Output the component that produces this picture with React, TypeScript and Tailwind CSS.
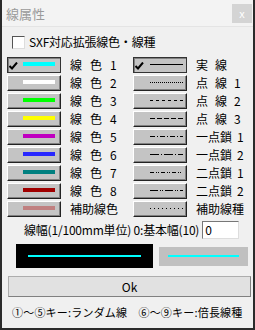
import React from "react";

const colors = ["#00ffff", "#ffffff", "#00ff00", "#ffff00", "#c000c0", "#2828ff", "#008080", "#a00000", "#c08080"];
const colorLabels = ["線 色 1", "線 色 2", "線 色 3", "線 色 4", "線 色 5", "線 色 6", "線 色 7", "線 色 8", "補助線色"];
const typeLabels = ["実 線", "点 線 1", "点 線 2", "点 線 3", "一点鎖 1", "一点鎖 2", "二点鎖 1", "二点鎖 2", "補助線種"];
const dashes = ["", "1 1", "3 3", "5 2", "5 2 1 2", "9 2 1 2", "4 2 1 1 1 2", "8 2 1 1 1 2", "1 3"];

function Check() {
  return (
    <svg width="9" height="8" viewBox="0 0 9 8" className="absolute left-[1px] top-[4px]">
      <path d="M0.5 4 L3 6.5 L8 0.5" stroke="#000" strokeWidth="2" fill="none" />
    </svg>
  );
}

function Label({ text, gap }: { text: string; gap: number }) {
  const parts = text.split(" ");
  return (
    <span className="flex items-center text-[12px] leading-none">
      {parts.map((p, i) => (
        <React.Fragment key={i}>
          {i > 0 && <span className="inline-block" style={{ width: gap }} />}
          <span>{p}</span>
        </React.Fragment>
      ))}
    </span>
  );
}

function Btn({ checked, children }: { checked?: boolean; children: React.ReactNode }) {
  return (
    <div
      className={
        "relative w-[54px] h-[16px] shrink-0 bg-[#c4c4c4] " +
        (checked
          ? "border border-[#333] shadow-[inset_1px_1px_0_#808080]"
          : "border-t border-l border-t-white border-l-white border-b border-r border-b-[#222] border-r-[#222] shadow-[inset_-1px_-1px_0_#808080]")
      }
    >
      {checked && <Check />}
      {children}
    </div>
  );
}

export default function App() {
  const font = { fontFamily: '"Noto Sans CJK JP", "Liberation Sans", sans-serif' };
  return (
    <div className="w-[255px] h-[330px] bg-[#f0f0f0] border-l-2 border-r-2 border-b-2 border-l-[#2b2b2b] border-r-[#2b2b2b] border-b-[#2b2b2b] flex flex-col text-black overflow-hidden" style={font}>
      <div className="h-[27px] shrink-0 bg-[#f3f3f3] border-b border-[#e4e4e4] flex items-center justify-between pl-[4px] pr-[1px]">
        <span className="text-[13px] text-[#9a9a9a] leading-none">線属性</span>
        <div className="w-[20px] h-[19px] bg-[#d4d4d4] flex items-center justify-center text-white text-[11px] leading-none">x</div>
      </div>
      <div className="flex items-center mt-[8px] ml-[10px] h-[14px]">
        <div className="w-[13px] h-[13px] bg-white border border-[#555] border-r-[#ddd] border-b-[#ddd]" />
        <span className="ml-[4px] text-[12px] leading-none tracking-[-0.2px]">SXF対応拡張線色・線種</span>
      </div>
      <div className="flex mt-[8px] ml-[5px]">
        <div className="flex flex-col gap-[2px]">
          {colors.map((c, i) => (
            <div key={i} className="flex items-center h-[16px]">
              <Btn checked={i === 0}>
                <div className="absolute left-[15px] top-[4px] w-[32px] h-[4px]" style={{ background: c }} />
              </Btn>
              <div className="ml-[9px] w-[54px]">
                <Label text={colorLabels[i]} gap={8} />
              </div>
            </div>
          ))}
        </div>
        <div className="flex flex-col gap-[2px] ml-[9px]">
          {typeLabels.map((t, i) => (
            <div key={i} className="flex items-center h-[16px]">
              <Btn checked={i === 0}>
                <svg width="33" height="14" className="absolute left-[16px] top-0">
                  <line x1="0" y1="6.5" x2="33" y2="6.5" stroke="#000" strokeWidth="1" strokeDasharray={dashes[i] || undefined} />
                </svg>
              </Btn>
              <div className="ml-[9px]">
                <Label text={t} gap={i >= 4 && i <= 7 ? 5 : 7} />
              </div>
            </div>
          ))}
        </div>
      </div>
      <div className="flex items-center mt-[4px] ml-[22px] h-[18px]">
        <span className="text-[12px] leading-none whitespace-pre tracking-[-0.2px]">線幅(1/100mm単位) 0:基本幅(10)</span>
        <div className="ml-[3px] w-[37px] h-[18px] bg-white border border-[#777] border-r-[#ddd] border-b-[#ddd] text-[12px] leading-none pl-[2px] flex items-center">0</div>
      </div>
      <div className="flex items-center mt-[5px] ml-[14px]">
        <div className="w-[137px] h-[24px] bg-black flex items-center justify-center">
          <div className="w-[113px] h-[2px] bg-[#00ffff]" />
        </div>
        <div className="ml-[6px] w-[89px] h-[19px] bg-[#c0c0c0] flex items-center justify-center">
          <div className="w-[71px] h-[2px] bg-[#00ffff]" />
        </div>
      </div>
      <div className="mt-[8px] ml-[6px] w-[243px] h-[21px] shrink-0 bg-[#e1e1e1] border border-[#adadad] border-r-[#808080] border-b-[#808080] flex items-center justify-center text-[12px] leading-none">
        Ok
      </div>
      <div className="mt-[10px] ml-[10px] text-[11px] leading-none whitespace-pre tracking-[0.2px]">①～⑤キー:ランダム線　⑥～⑨キー:倍長線種</div>
    </div>
  );
}
